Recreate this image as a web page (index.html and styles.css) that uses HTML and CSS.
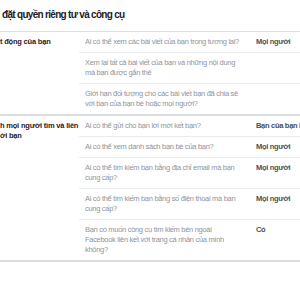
FILE: index.html
```html
<!DOCTYPE html>
<html lang="vi">
<head>
<meta charset="utf-8">
<title>Cài đặt quyền riêng tư và công cụ</title>
<link rel="stylesheet" href="styles.css">
</head>
<body>
<div class="page">
  <h1 class="title">đặt quyền riêng tư và công cụ</h1>

  <section class="group">
    <div class="label">t động của bạn</div>
    <div class="rows">
      <div class="row">
        <div class="q">Ai có thể xem các bài viết của bạn trong tương lai?</div>
        <div class="v">Mọi người</div>
      </div>
      <div class="row">
        <div class="q">Xem lại tất cả bài viết của bạn và những nội dung mà bạn được gắn thẻ</div>
        <div class="v"></div>
      </div>
      <div class="row">
        <div class="q">Giới hạn đối tượng cho các bài viết bạn đã chia sẻ với bạn của bạn bè hoặc mọi người?</div>
        <div class="v"></div>
      </div>
    </div>
  </section>

  <section class="group">
    <div class="label">h mọi người tìm và liên<br>ới bạn</div>
    <div class="rows">
      <div class="row">
        <div class="q">Ai có thể gửi cho bạn lời mời kết bạn?</div>
        <div class="v">Bạn của bạn bè</div>
      </div>
      <div class="row">
        <div class="q">Ai có thể xem danh sách bạn bè của bạn?</div>
        <div class="v">Mọi người</div>
      </div>
      <div class="row">
        <div class="q">Ai có thể tìm kiếm bạn bằng địa chỉ email mà bạn cung cấp?</div>
        <div class="v">Mọi người</div>
      </div>
      <div class="row">
        <div class="q">Ai có thể tìm kiếm bạn bằng số điện thoại mà bạn cung cấp?</div>
        <div class="v">Mọi người</div>
      </div>
      <div class="row">
        <div class="q">Bạn có muốn công cụ tìm kiếm bên ngoài<br>Facebook liên kết với trang cá nhân của mình<br>không?</div>
        <div class="v">Có</div>
      </div>
    </div>
  </section>
</div>
</body>
</html>
```

FILE: styles.css
```css
html, body {
  margin: 0;
  padding: 0;
  width: 300px;
  height: 300px;
  overflow: hidden;
  background: #ffffff;
}

.page {
  width: 340px;
  font-family: "Liberation Sans", Arial, sans-serif;
  color: #1d2129;
}

.title {
  margin: 0;
  padding: 8px 0 9px 2px;
  font-size: 10px;
  letter-spacing: -0.7px;
  line-height: 14px;
  font-weight: bold;
  color: #1d2129;
  border-bottom: 1px solid #dddfe2;
}

.group {
  display: grid;
  grid-template-columns: 79px 1fr;
  border-bottom: 2px solid #dadde1;
}

.label {
  padding-top: 5px;
  font-size: 7.5px;
  letter-spacing: -0.2px;
  line-height: 10px;
  font-weight: bold;
  color: #1d2129;
  white-space: nowrap;
}

.rows {
  display: flex;
  flex-direction: column;
}

.row {
  display: flex;
  gap: 12px;
  padding: 5px 0 5px 6px;
  border-bottom: 1px solid #e9ebee;
  font-size: 7.5px;
  letter-spacing: -0.3px;
  line-height: 10px;
}

.row:last-child {
  border-bottom: none;
}

.q {
  width: 159px;
  flex: none;
  color: #90949c;
}

.v {
  flex: none;
  font-weight: bold;
  color: #4b4f56;
  white-space: nowrap;
}
```
